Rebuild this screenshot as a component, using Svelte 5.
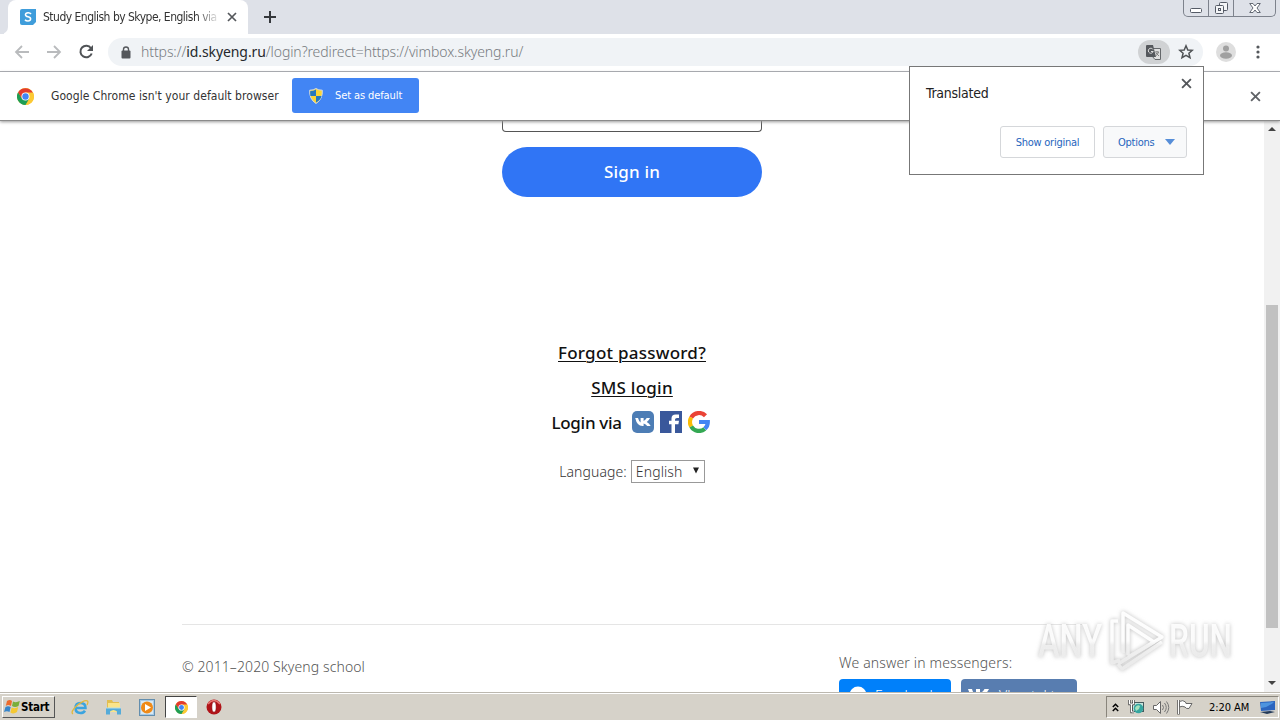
<script>
  const petals = [120, 240];
  const petalColors = ['#fcc934', '#1e9e55'];
</script>

{#snippet chrome(size)}
  <svg width={size} height={size} viewBox="0 0 18 18">
    <circle cx="9" cy="9" r="9" fill="#fcc934" />
    {#each petals as angle, i}
      <path d="M1.2 4.5A9 9 0 0 1 16.8 4.5L9 4.8L5.1 11.2Z" fill={petalColors[i]} transform="rotate({angle} 9 9)" />
    {/each}
    <path d="M1.2 4.5L5.1 11.2L9 4.8H16.8A9 9 0 0 0 1.2 4.5" fill="#e33b2e" />
    <circle cx="9" cy="9" r="4.3" fill="#fff" />
    <circle cx="9" cy="9" r="3.4" fill="#4285f4" />
  </svg>
{/snippet}

{#snippet cross(size, color)}
  <svg width={size} height={size} viewBox="0 0 10 10"><path d="M1 1L9 9M9 1L1 9" stroke={color} stroke-width="1.7" fill="none" /></svg>
{/snippet}

<div class="screen">
  <header class="tabs">
    <div class="prev"></div>
    <div class="tab">
      <svg class="fav" width="16" height="16" viewBox="0 0 16 16"><path d="M2 0H16V13L13 16H2Q0 16 0 14V2Q0 0 2 0Z" fill="#3f9ddb" /><path d="M11 5Q10 3.7 8 3.8Q5.4 3.9 5.5 5.8Q5.6 7.4 8 7.8Q10.7 8.3 10.6 10Q10.4 12 8 12Q6 12 5 10.7" fill="none" stroke="#fff" stroke-width="1.6" /></svg>
      <span class="title">Study English by Skype, English via S</span>
      {@render cross(10, '#54575b')}
    </div>
    <svg class="plus" width="12" height="12" viewBox="0 0 12 12"><path d="M6 0V12M0 6H12" stroke="#35383c" stroke-width="2" /></svg>
    <div class="caption">
      <i><svg width="12" height="5" viewBox="0 0 12 5"><rect x=".5" y=".5" width="11" height="4" rx="1" fill="#fff" stroke="#555b66" /></svg></i>
      <i><svg width="13" height="12" viewBox="0 0 13 12"><g fill="#f4f5f7" stroke="#555b66"><rect x="4.5" y=".5" width="8" height="8" rx="1" /><rect x=".5" y="3.5" width="8" height="8" rx="1" /><rect x="3.5" y="6.5" width="2" height="2" /></g></svg></i>
      <i><svg width="12" height="10" viewBox="0 0 12 10"><path d="M.7 .5H4L6 3L8 .5H11.3L8 5L11.3 9.5H8L6 7L4 9.5H.7L4 5Z" fill="#fff" stroke="#555b66" stroke-width=".9" /></svg></i>
    </div>
  </header>

  <div class="toolbar">
    <svg class="nav" width="80" height="18" viewBox="0 0 80 18"><g fill="none" stroke="#b9bbbd" stroke-width="1.8"><path d="M15 9H2M8 3L2 9L8 15" /><path d="M33 9H46M40 3L46 9L40 15" /></g><path d="M77 5.2A5.8 5.8 0 1 0 77.7 10.5" fill="none" stroke="#505356" stroke-width="2" /><path d="M79 2V8H73Z" fill="#505356" /></svg>
    <div class="omni">
      <svg width="10" height="13" viewBox="0 0 10 13"><rect x=".5" y="4.5" width="9" height="8" rx="1" fill="#55585c" /><path d="M2.5 5V3.2Q2.5 1 5 1T7.5 3.2V5" fill="none" stroke="#55585c" stroke-width="1.4" /></svg>
      <span class="url">https://<b>id.skyeng.ru</b>/login?redirect=https://vimbox.skyeng.ru/</span>
      <div class="translate">
        <svg width="16" height="15" viewBox="0 0 16 15"><path d="M6.5 3.5H14.5V14.5H9L6 11" fill="#e0e0e0" stroke="#65686b" /><path d="M1 0H7L10 12H1Q0 12 0 11V1Q0 0 1 0Z" fill="#55585c" /><path d="M7 4.5A2.5 2.5 0 1 0 7.2 6.5H5" fill="none" stroke="#ddd" stroke-width="1" /><path d="M9 7H13M11 6V7M12.5 7Q12 9.5 9.5 11M10 8L13 11" fill="none" stroke="#777" stroke-width=".9" /></svg>
      </div>
      <svg class="star" width="16" height="16" viewBox="0 0 16 16"><path d="M8 1.8L9.8 6L14.3 6.3L10.9 9.3L12 13.7L8 11.3L4 13.7L5.1 9.3L1.7 6.3L6.2 6Z" fill="none" stroke="#505356" stroke-width="1.5" /></svg>
    </div>
    <svg class="avatar" width="20" height="20" viewBox="0 0 20 20"><circle cx="10" cy="10" r="10" fill="#dedede" /><circle cx="10" cy="6.5" r="3" fill="#a0a0a0" /><ellipse cx="10" cy="13.5" rx="6" ry="3.2" fill="#a0a0a0" /></svg>
    <svg class="dots" width="4" height="14" viewBox="0 0 4 14" fill="#55585c"><circle cx="2" cy="2" r="1.6" /><circle cx="2" cy="7" r="1.6" /><circle cx="2" cy="12" r="1.6" /></svg>
  </div>

  <div class="infobar">
    {@render chrome(17)}
    <span class="message">Google Chrome isn't your default browser</span>
    <button class="default">
      <svg width="14" height="16" viewBox="0 0 14 16"><path d="M7 .5Q9.5 2.3 13.3 2.2Q14 11 7 15.5Q0 11 .7 2.2Q4.5 2.3 7 .5Z" fill="#fbd535" stroke="#d3dbe0" /><path d="M7 1.5V8H1.4Q.9 5 1.3 3Q4.5 3 7 1.5M7 8H12.6Q11.5 12 7 14.6Z" fill="#2778bd" /></svg>
      <span>Set as default</span>
    </button>
    <div class="dismiss">{@render cross(11, '#606367')}</div>
  </div>

  <div class="view">
    <main>
      <div class="field"></div>
      <button class="signin"><span>Sign in</span></button>
      <a class="link forgot" href="#forgot">Forgot password?</a>
      <a class="link sms" href="#sms">SMS login</a>
      <div class="via">
        <span>Login via</span>
        <svg width="22" height="22" viewBox="0 0 22 22"><rect width="22" height="22" rx="5" fill="#4d7db5" /><path d="M3.2 7H6Q6.8 10 8.6 11.5V7H11.6V10Q13.5 9 14.7 7H18Q17 9.5 14.8 11Q17.4 12.5 18.7 15H15.2Q14 13.2 11.6 12.4V15H10.5Q5 15 3.2 7Z" fill="#fff" /></svg>
        <svg width="22" height="22" viewBox="0 0 22 22"><rect width="22" height="22" fill="#3a589b" /><path d="M11.5 22V13.2H9V9.8H11.5V7.5Q11.5 3.5 15.7 3.5H19V7H17Q15 7 15 8.5V9.8H19L18.4 13.2H15V22Z" fill="#fff" /></svg>
        <svg width="22" height="22" viewBox="0 0 22 22" fill="none" stroke-width="4.2"><path d="M3.2 6.5A9 9 0 0 1 17.5 4.8" stroke="#ea4335" /><path d="M3.2 6.5A9 9 0 0 0 3.2 15.5" stroke="#fbbc05" /><path d="M3.2 15.5A9 9 0 0 0 16.8 17.8" stroke="#34a853" /><path d="M16.8 17.8A9 9 0 0 0 19.8 11H11" stroke="#4285f4" /></svg>
      </div>
      <div class="language"><span>Language:</span><div class="select"><span>English</span><svg width="6" height="7" viewBox="0 0 7 7"><path d="M0 0H7L3.5 7Z" fill="#222" /></svg></div></div>
      <footer>
        <span class="copy">© 2011–2020 Skyeng school</span>
        <div class="messengers">
          <span class="answer">We answer in messengers:</span>
          <div class="chips">
            <div class="chip fb"><svg width="18" height="18" viewBox="0 0 18 18"><circle cx="9" cy="9" r="8.5" fill="#fff" /></svg><span>Facebook</span></div>
            <div class="chip vk"><svg width="22" height="14" viewBox="0 0 22 14"><path d="M0 1H4Q5 5 8 8V1H12V5Q15 4 16.5 1H21Q19 5 16 7Q19 9 21 13H17Q15 10 12 9V13Q4 13 0 1Z" fill="#fff" /></svg><span>Vkontakte</span></div>
          </div>
        </div>
      </footer>
    </main>
    <div class="scroll">
      <svg width="8" height="4" viewBox="0 0 8 4"><path d="M0 4L4 0L8 4Z" fill="#444" /></svg>
      <div class="thumb"></div>
      <svg width="8" height="4" viewBox="0 0 8 4"><path d="M0 0L4 4L8 0Z" fill="#444" /></svg>
    </div>
  </div>

  <div class="taskbar">
    <div class="start">
      <svg width="17" height="16" viewBox="0 0 17 16"><path d="M3 2Q6 0 8 2L7 7Q4 5 1.8 7Z" fill="#ed6b2d" /><path d="M9 2.5Q12 4 15.8 2L14.5 7Q11 9 8 7Z" fill="#79ae3b" /><path d="M1.5 8Q4 6.5 6.7 8L5.5 13Q3 11.5 0 13Z" fill="#3785ca" /><path d="M7.7 8.5Q11 10 14.2 8L13 13Q9.5 15.5 6.4 13.5Z" fill="#f5c832" /></svg>
      <span>Start</span>
    </div>
    <svg class="ie" width="18" height="17" viewBox="0 0 18 17"><path d="M4.5 9H14.5Q14.5 4 9.5 4Q4.5 4 4.5 9Q4.5 14 9.5 14Q12.5 14 14 11.7" fill="none" stroke="#3ba4df" stroke-width="2.5" /><path d="M2 15Q-1 13 6 6.5Q14 0 16.5 2Q17.5 3 16 6" fill="none" stroke="#e2b83d" stroke-width="1.3" /></svg>
    <svg class="folder" width="17" height="17" viewBox="0 0 17 17"><path d="M2 1H7L8 3H14V12H2Z" fill="#e2be50" /><path d="M3 4H15V13H3Z" fill="#fae48a" /><path d="M1 9H16V15.5H12V12.5Q8.5 9.5 5 12.5V15.5H1Z" fill="#55abd9" /><path d="M1 9H16" stroke="#b6dfe9" /></svg>
    <svg class="media" width="16" height="17" viewBox="0 0 16 17"><rect x=".5" y=".5" width="15" height="16" fill="#a6cae8" stroke="#638eae" /><rect x="2" y="2" width="12" height="13" fill="#d9e9f2" /><circle cx="8" cy="8.5" r="6" fill="#ef8a18" /><path d="M6 5L12 8.5L6 12Z" fill="#fff" /></svg>
    <div class="active">{@render chrome(13)}</div>
    <svg class="opera" width="16" height="16" viewBox="0 0 16 16"><circle cx="8" cy="8" r="7.5" fill="#b01318" /><path d="M2 5Q8 -2 14 5" fill="none" stroke="#e77672" stroke-width="1.5" /><ellipse cx="8" cy="8" rx="2.1" ry="5.2" fill="#fff" stroke="#7c080c" stroke-width=".5" /></svg>
    <div class="tray">
      <svg width="7" height="9" viewBox="0 0 7 9"><path d="M.8 4L3.5 1.3L6.2 4M.8 8L3.5 5.3L6.2 8" fill="none" stroke="#000" stroke-width="1.5" /></svg>
      <svg class="network" width="17" height="16" viewBox="0 0 17 16"><rect x="4.5" y="3.5" width="11" height="9" fill="#c8e5df" stroke="#455a5d" /><circle cx="10.5" cy="9.5" r="4.8" fill="#36a6a0" /><path d="M7 9Q9 5 12 7L11 10L8 12" fill="#a7e2bd" /><path d="M1.5 1V5H5.5V1M3.5 5V13H6" fill="none" stroke="#555" stroke-width="2.5" /><path d="M1.5 1V5H5.5V1M3.5 5V13H6" fill="none" stroke="#fff" /></svg>
      <svg class="sound" width="17" height="15" viewBox="0 0 17 15"><path d="M.5 5.5H3.5L7.5 1.5V13.5L3.5 9.5H.5Z" fill="#fff" stroke="#666" /><path d="M9.5 5Q11.5 7.5 9.5 10M11.5 3Q15 7.5 11.5 12M13.5 1.5Q18 7.5 13.5 13.5" fill="none" stroke="#777" /></svg>
      <svg class="flag" width="16" height="16" viewBox="0 0 16 16"><path d="M1.5 1V15.5" stroke="#555" stroke-width="2.5" /><path d="M1.5 1V15" stroke="#fff" /><path d="M2.5 2.5Q6 .5 8.5 3L9 4.5H15L12 9.5Q9 10 8 8Q5 6.5 2.5 8Z" fill="#fff" stroke="#666" /></svg>
      <span>2:20 AM</span>
      <svg class="desktop" width="16" height="13" viewBox="0 0 16 13"><path d="M0 1L15 0V9L1 10Z" fill="#2c65bf" /><path d="M1 2L14 1Q9 6 1 7Z" fill="#4e94df" /><path d="M0 11L10 10L15 11L7 13Z" fill="#233a59" /></svg>
    </div>
  </div>

  <div class="bubble">
    <div class="top"><span>Translated</span><div class="bubble-close">{@render cross(11, '#54575b')}</div></div>
    <div class="actions"><button class="original"><span>Show original</span></button><button class="options"><span>Options</span><svg width="10" height="6" viewBox="0 0 10 6"><path d="M0 0H10L5 6Z" fill="#568ed8" /></svg></button></div>
  </div>

  <svg class="watermark" width="210" height="76" viewBox="0 0 210 76">
    <defs>
      <linearGradient id="fade" gradientUnits="userSpaceOnUse" x1="0" y1="18" x2="0" y2="58">
        <stop offset="0" stop-color="#fff" /><stop offset=".5" stop-color="#fff" /><stop offset=".6" stop-color="#f1f1f1" /><stop offset="1" stop-color="#ececec" />
      </linearGradient>
    </defs>
    <g class="mark">
      <g fill="url(#fade)" fill-opacity=".9"><text x="8" y="54" textLength="64" lengthAdjust="spacingAndGlyphs">ANY</text><text x="139" y="54" textLength="63" lengthAdjust="spacingAndGlyphs">RUN</text></g>
      <g fill="none" stroke="url(#fade)" stroke-opacity=".95" stroke-width="3.5" stroke-linejoin="round">
        <path d="M88 18H82V60L90 57" />
        <path d="M93 50V10L132 34L88 61" />
        <path d="M98 52V22L124 39L98 54" />
        <path d="M132 39L92 66L88 61" />
      </g>
    </g>
  </svg>
</div>

<style>
  :global(body) { margin: 0; overflow: hidden; }
  * { box-sizing: border-box; }
  svg { display: block; flex: none; }
  span { white-space: nowrap; }
  button { border: 0; padding: 0; margin: 0; font: inherit; display: flex; align-items: center; }
  .screen { position: relative; width: 1280px; height: 720px; overflow: hidden; background: #fff; display: flex; flex-direction: column; font-family: "Noto Sans", sans-serif; color: #333; }
  .tabs { height: 34px; flex: none; background: #dee1e8; display: flex; align-items: flex-start; }
  .prev { width: 8px; height: 34px; background: #dee1e8; border-bottom-right-radius: 7px; box-shadow: 4px 4px 0 #fff; clip-path: inset(0); }
  .tab { width: 240px; height: 34px; background: #fff; border-radius: 8px 8px 0 0; display: flex; align-items: center; padding-left: 12px; }
  .title { width: 176px; margin: 0 8px 0 7px; overflow: hidden; font: 12px/18px "DejaVu Sans Condensed", "DejaVu Sans", sans-serif; font-stretch: condensed; letter-spacing: -.51px; mask-image: linear-gradient(90deg, #000 87%, #0003 98%); }
  .plus { margin: 11px 0 0 16px; }
  .caption { margin-left: auto; margin-right: 4px; width: 93px; height: 17px; display: flex; border: 1px solid #7d828c; border-top: 0; border-radius: 0 0 5px 5px; }
  .caption i { display: grid; place-items: center; width: 25px; border-right: 1px solid #7d828c; }
  .caption i:first-child { padding-top: 4px; }
  .caption i:last-child { flex: 1; border: 0; }
  .toolbar { height: 38px; flex: none; border-bottom: 1px solid #aaadb2; display: flex; align-items: center; padding: 0 0 1px 14px; }
  .omni { margin-left: 14px; width: 1095px; height: 28px; border-radius: 14px; background: #f0f3f6; display: flex; align-items: center; padding-left: 13px; }
  .url { margin-left: 10px; font-size: 14px; line-height: 20px; letter-spacing: -.09px; color: #777b80; font-weight: 300; }
  .url b { font-weight: 400; color: #25282c; }
  .translate { margin-left: auto; width: 32px; height: 24px; border-radius: 12px; background: #d0d2d4; display: grid; place-items: center; }
  .star { margin: 0 9px 0 8px; }
  .avatar { margin-left: 13px; }
  .dots { margin-left: 20px; }
  .infobar { position: relative; height: 49px; flex: none; border-bottom: 1px solid #8b8b8b; box-shadow: 0 1px 3px #999; display: flex; align-items: center; padding: 0 19px 0 17px; }
  .message { width: 228px; margin-left: 17px; font: 12px/18px "DejaVu Sans Condensed", "DejaVu Sans", sans-serif; font-stretch: condensed; letter-spacing: .05px; }
  .default { width: 127px; height: 35px; margin: -1px 0 0 13px; border-radius: 3px; padding-left: 17px; background: #4285f4; color: #fff; font: 11px/18px "DejaVu Sans Condensed", "DejaVu Sans", sans-serif; font-stretch: condensed; letter-spacing: -.1px; }
  .default span { margin-left: 12px; }
  .dismiss { margin-left: auto; }
  .view { height: 571px; flex: none; display: flex; overflow: hidden; }
  main { width: 1264px; display: flex; flex-direction: column; align-items: center; }
  .field { width: 260px; height: 11px; flex: none; border: 1px solid #555; border-top: 0; border-radius: 0 0 4px 4px; }
  .signin { width: 260px; height: 50px; margin-top: 15px; padding-bottom: 2px; flex: none; border-radius: 25px; background: #3075f5; color: #fff; justify-content: center; font-size: 17px; font-weight: 500; letter-spacing: .2px; }
  .link { color: #111; font-size: 17px; font-weight: 500; line-height: 24px; letter-spacing: .24px; text-underline-offset: 2px; text-decoration-thickness: 1px; }
  .forgot { margin-top: 144px; }
  .sms { margin-top: 11px; }
  .via { margin-top: 9px; height: 26px; display: flex; align-items: center; gap: 6px; color: #111; font-size: 17px; font-weight: 500; margin-right: 3px; }
  .via span { width: 70px; margin-right: 4px; letter-spacing: -.3px; }
  .via svg { margin-top: 0; }
  .language { margin-top: 25px; height: 23px; display: flex; align-items: center; gap: 4px; font-size: 14px; letter-spacing: .1px; font-weight: 300; }
  .select { width: 74px; height: 23px; border: 1px solid #999; display: flex; align-items: center; justify-content: space-between; padding: 0 5px 0 4px; }
  .select svg { margin-top: -2px; }
  footer { width: 900px; height: 67px; margin-top: 141px; flex: none; border-top: 1px solid #e5e5e5; display: flex; justify-content: space-between; font-size: 14px; color: #555; font-weight: 300; letter-spacing: .1px; }
  .copy { margin-top: 32px; line-height: 20px; }
  .messengers { width: 243px; padding-top: 28px; }
  .answer { display: block; line-height: 20px; letter-spacing: .15px; }
  .chips { margin-top: 6px; display: flex; gap: 10px; }
  .chip { height: 32px; border-radius: 4px; color: #fff; font-size: 14px; display: flex; align-items: center; flex: none; }
  .fb { width: 112px; padding-left: 10px; background: #0080fa; }
  .fb span { margin-left: 8px; }
  .vk { width: 116px; padding-left: 7px; background: #587db0; }
  .vk span { margin-left: 9px; }
  .scroll { width: 16px; background: #f1f1f1; display: flex; flex-direction: column; align-items: center; padding-top: 6px; }
  .thumb { width: 12px; height: 323px; flex: none; margin: 174px 0 53px; background: #c1c1c1; }
  .taskbar { height: 28px; flex: none; background: #d6d2c9; border-top: 1px solid #bcb8af; box-shadow: inset 0 1px #fff; padding: 2px 1px 1px 2px; display: flex; align-items: center; }
  .start { width: 53px; height: 22px; display: flex; align-items: center; border: 1px solid; border-color: #fff #555 #555 #fff; color: #000; padding-left: 1px; font: bold 11.5px "DejaVu Sans Condensed", "DejaVu Sans", sans-serif; font-stretch: condensed; letter-spacing: -.25px; }
  .ie { margin-left: 16px; }
  .folder { margin-left: 16px; }
  .media { margin-left: 17px; }
  .active { width: 32px; height: 22px; margin-left: 10px; border: 1px solid; border-color: #444 #fff #fff #444; background: #fff; display: grid; place-items: center; }
  .opera { margin-left: 9px; }
  .tray { margin-left: auto; width: 173px; height: 22px; border: 1px solid; border-color: #89857c #fff #fff #89857c; display: flex; align-items: center; padding-left: 5px; color: #000; font: 11px "DejaVu Sans Condensed", "DejaVu Sans", sans-serif; font-stretch: condensed; }
  .network { margin-left: 9px; }
  .sound { margin-left: 8px; }
  .flag { margin-left: 7px; }
  .tray span { width: 42px; margin-left: 16px; letter-spacing: -.05px; }
  .desktop { margin-left: 9px; }
  .bubble { position: absolute; left: 909px; top: 66px; width: 295px; height: 109px; background: #fff; border: 1px solid #777; padding: 11px 16px 16px; display: flex; flex-direction: column; justify-content: space-between; }
  .top { display: flex; justify-content: space-between; }
  .top span { margin-top: 5px; font: 14px/20px "DejaVu Sans Condensed", "DejaVu Sans", sans-serif; font-stretch: condensed; letter-spacing: -.25px; color: #222; }
  .bubble-close { margin-right: -5px; }
  .actions { display: flex; justify-content: flex-end; gap: 8px; color: #2565bd; font: 11px "DejaVu Sans Condensed", "DejaVu Sans", sans-serif; font-stretch: condensed; letter-spacing: -.25px; }
  .actions button { height: 32px; border: 1px solid #d5d7da; border-radius: 3px; background: #fff; color: inherit; letter-spacing: inherit; }
  .original { width: 95px; justify-content: center; }
  .actions .options { width: 84px; padding: 0 11px 0 14px; justify-content: space-between; background: #f8f9fa; }
  .watermark { position: absolute; left: 1030px; top: 603px; }
  .mark { filter: drop-shadow(0 0 2px #999a); font: 500 46px "Roboto", sans-serif; }
</style>
